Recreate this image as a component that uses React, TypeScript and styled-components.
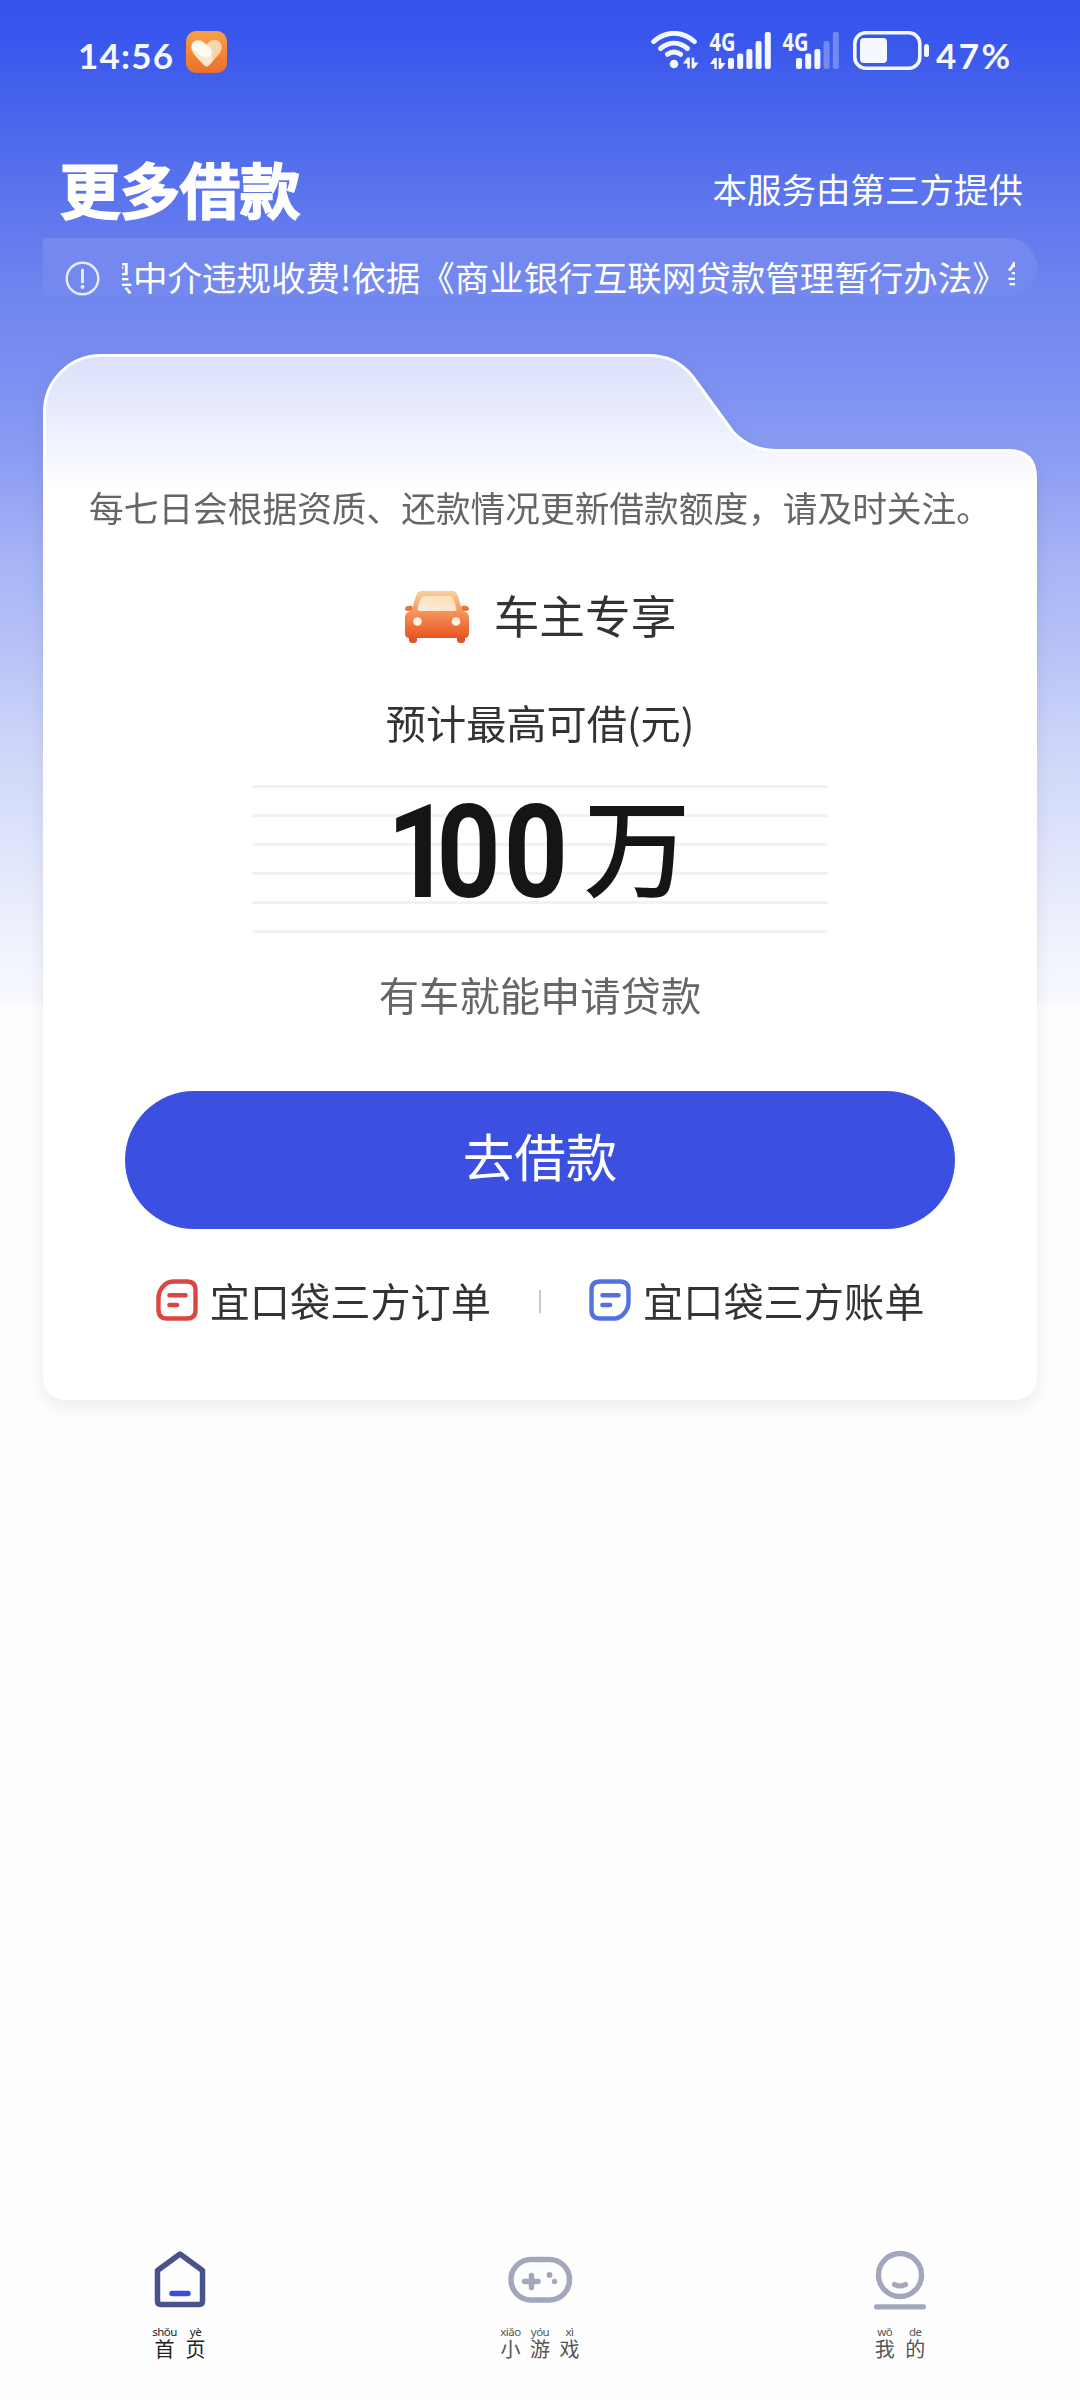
import React from 'react';
import styled, { createGlobalStyle } from 'styled-components';

const GlobalStyle = createGlobalStyle`
  * { box-sizing: border-box; }
  body {
    margin: 0;
    background: #fefefe;
    font-family: "Noto Sans", "Noto Sans CJK SC", sans-serif;
  }
`;

const cjk = '"Noto Sans CJK SC", sans-serif';

const Page = styled.div`
  width: 1080px;
  height: 2400px;
  overflow: hidden;
  display: flex;
  flex-direction: column;
  background:
    linear-gradient(
      180deg,
      #3654ec 0px, #3957ec 40px, #4c68ec 130px, #6279ee 225px, #7086ef 300px,
      #7e92f2 390px, #8d9df3 460px, #a7b4f6 560px, #b6c1f7 640px,
      #cdd5f9 740px, #dfe5fb 850px, #eef1fd 930px, #f9faff 1005px
    ) 0 0 / 100% 1005px no-repeat,
    #fefefe;
`;

const StatusBar = styled.header`
  height: 108px;
  padding: 31px 69px 0 78px;
  display: flex;
  justify-content: space-between;
  align-items: flex-start;
  color: #f5f8ff;
`;

const Cluster = styled.div`
  display: flex;
  align-items: flex-start;
`;

const StatusText = styled.span<{ $width: number; $spacing: number }>`
  width: ${(p) => p.$width}px;
  padding-top: 5px;
  font: 700 35px/38px Lato, sans-serif;
  letter-spacing: ${(p) => p.$spacing}px;
  white-space: nowrap;
`;

const Percent = styled(StatusText)`
  margin-left: 6px;
`;

const SignalSlot = styled.div<{ $before: number; $after: number }>`
  width: 63px;
  height: 40px;
  margin: 0 ${(p) => p.$after}px 0 ${(p) => p.$before}px;
`;

const SignalSvg = styled.svg`
  display: block;
  overflow: visible;
  font: 700 25px "Open Sans", sans-serif;
`;

const TitleRow = styled.div`
  height: 130px;
  padding: 35px 57px 0 60px;
  display: flex;
  justify-content: space-between;
  color: #fff;
`;

const Title = styled.h1`
  margin: 0;
  font: 500 60px/90px ${cjk};
  -webkit-text-stroke: 2.6px #fff;
  stroke-linejoin: round;
`;

const Provider = styled.span`
  padding-top: 20px;
  font: 400 34.5px/50px ${cjk};
`;

const Notice = styled.div`
  margin: 0 43px;
  height: 59px;
  padding: 0 22px;
  display: flex;
  align-items: flex-start;
  border-radius: 0 30px 30px 0;
  background: linear-gradient(180deg, rgba(255, 255, 255, 0.1), rgba(255, 255, 255, 0.03));
`;

const AlertSlot = styled.div`
  padding-top: 23px;
  height: 59px;
`;

const Marquee = styled.div`
  width: 893px;
  height: 62px;
  margin-left: 22px;
  padding-top: 10px;
  overflow: hidden;
`;

const MarqueeText = styled.div`
  margin-left: -23.5px;
  font: 400 34.5px/56px ${cjk};
  color: #fff;
  white-space: nowrap;
`;

const Card = styled.main`
  margin: 57px 43px 0;
  height: 1046px;
  display: flex;
  flex-direction: column;
  filter: drop-shadow(0 6px 9px rgba(0, 0, 0, 0.08));
`;

const TabShape = styled.svg`
  display: block;
  flex: none;
`;

const Panel = styled.section`
  height: 900px;
  border-radius: 0 0 22px 22px;
  background: #fff;
  display: flex;
  flex-direction: column;
  align-items: center;
`;

const Line = styled.div<{ $size: number; $height: number; $top: number; $color: string }>`
  margin-top: ${(p) => p.$top}px;
  font: 400 ${(p) => p.$size}px/${(p) => p.$height}px ${cjk};
  color: ${(p) => p.$color};
  white-space: nowrap;
`;

const Hint = styled(Line)`
  align-self: flex-start;
  padding-left: 46px;
`;

const Product = styled.div`
  margin-top: 48px;
  height: 68px;
  display: flex;
  align-items: center;
  gap: 24px;
  font: 400 45.7px/68px ${cjk};
  color: #333;
`;

const CarSvg = styled.svg`
  margin-top: 6px;
`;

const AmountBox = styled.div`
  margin-top: 33.5px;
  width: 576px;
  height: 148px;
  padding-left: 134.5px;
  display: flex;
  background: repeating-linear-gradient(180deg, #f0f1f9 0 2.6px, transparent 2.6px 29.1px);
  color: #151515;
`;

const Digits = styled.span`
  width: 196px;
  height: 136px;
  font: 700 130px/136px Roboto, sans-serif;
  letter-spacing: 3.6px;
  white-space: nowrap;
  transform: scaleX(0.86);
  transform-origin: 0 0;
`;

const LeadDigit = styled.span`
  letter-spacing: -17px;
`;

const Unit = styled.span`
  width: 108px;
  margin-left: 1px;
  font: 500 107px/116px ${cjk};
`;

const Button = styled.button`
  margin-top: 67px;
  width: 830px;
  height: 138px;
  flex: none;
  padding: 0 0 10px;
  border: 0;
  border-radius: 69px;
  background: #3b50e0;
  color: #fff;
  font: 400 51.5px/76px ${cjk};
`;

const Links = styled.div`
  margin-top: 41px;
  height: 60px;
  display: flex;
  align-items: center;
`;

const LinkItem = styled.div`
  display: flex;
  align-items: center;
  gap: 12px;
  font: 400 40.2px/60px ${cjk};
  color: #333;
`;

const Divider = styled.i`
  width: 2px;
  height: 23px;
  margin: 2px 48px 0;
  background: #c9c9c9;
`;

const Nav = styled.nav`
  margin-top: 850px;
  height: 150px;
  display: grid;
  grid-template-columns: repeat(3, 1fr);
`;

const NavItem = styled.div<{ $color: string }>`
  display: flex;
  flex-direction: column;
  align-items: center;
  gap: 15px;
  color: ${(p) => p.$color};
`;

const Label = styled.div<{ $gap: number }>`
  display: flex;
  gap: ${(p) => p.$gap}px;
`;

const Syllable = styled.div`
  width: 20px;
  display: flex;
  flex-direction: column;
  align-items: center;
`;

const Pinyin = styled.span`
  font: 400 11.5px/13px "Noto Sans", sans-serif;
  letter-spacing: -0.5px;
  white-space: nowrap;
`;

const Hanzi = styled.span`
  font: 400 20px/21px KaiTi, ${cjk};
`;

const HeartBadge = () => (
  <svg width="41" height="42" viewBox="0 0 41 42">
    <defs>
      <linearGradient id="badge" x1="0" y1="0" x2="0" y2="1">
        <stop offset="0" stopColor="#f5a147" />
        <stop offset="1" stopColor="#ee6e2c" />
      </linearGradient>
    </defs>
    <rect width="41" height="42" rx="10" fill="url(#badge)" />
    <path d="M20.500 35.500c-1.500 0-3-2-5-4L7.500 22.500C3 17 5.500 9 12 9c4 0 6.500 2 8.500 4.500C22.500 11 25 9 28.500 9c7 0 9.500 8 5 13.500l-8 9c-2 2-3.500 4-5 4z" fill="#fbd5ab" />
    <path d="M20.500 35.500c-1.500 0-3-2-5-4L7.500 22.500l8-4 10 1 1 11c-2 2-4.500 5-6 5z" fill="#fbe8d3" />
    <path d="M11.500 15.500L20 20.500" stroke="#fffaf2" strokeWidth="11.500" strokeLinecap="round" />
  </svg>
);

const Arrows = ({ x, y }: { x: number; y: number }) => (
  <g transform={`translate(${x} ${y})`} fill="currentColor">
    <path d="M4.300 0h2.500v11H4.300V6H0z" />
    <path d="M8.700 0h2.500v5h4.300L11.200 11H8.700z" />
  </g>
);

const Wifi = () => (
  <svg width="48" height="40" viewBox="0 0 48 40">
    <g fill="none" stroke="currentColor" strokeWidth="5" strokeLinecap="round">
      <path d="M2.700 10.500C15-.4 31-.4 43.300 10.500" />
      <path d="M9.500 17.500c8.500-7 18.500-7 27 0" />
      <path d="M16.500 23.300c4.200-3 8.800-3 13 0" />
    </g>
    <circle cx="23" cy="33" r="4.300" fill="currentColor" />
    <Arrows x={32} y={26.500} />
  </svg>
);

const Signal = ({ dim, arrows }: { dim: number; arrows?: boolean }) => {
  const tops = [27, 22.5, 18, 10, 1];
  const start = arrows ? 19 : 14;
  return (
    <SignalSvg width="63" height="40" viewBox="0 0 63 40">
      <text x="0.500" y="19.500" textLength="26" lengthAdjust="spacingAndGlyphs" fill="currentColor">4G</text>
      {arrows && <Arrows x={1} y={27} />}
      {tops.map((top, i) => (
        <rect key={top} x={start + i * 9.2} y={top} width="6" height={38 - top} rx="2" fill="currentColor" opacity={i >= 5 - dim ? 0.3 : 1} />
      ))}
    </SignalSvg>
  );
};

const Battery = () => (
  <svg width="77" height="40" viewBox="0 0 77 40">
    <rect x="1.800" y="1.800" width="65" height="35.500" rx="11" fill="none" stroke="currentColor" strokeWidth="3.600" />
    <rect x="7" y="7" width="27" height="25" rx="4" fill="currentColor" />
    <rect x="71" y="13" width="5" height="13" rx="2.500" fill="currentColor" />
  </svg>
);

const Alert = () => (
  <svg width="35" height="35" viewBox="0 0 35 35" fill="none" stroke="#e8ecff" strokeWidth="2.400">
    <circle cx="17.500" cy="17.500" r="15.800" />
    <path d="M17.500 9v12" strokeWidth="3" strokeLinecap="round" />
    <circle cx="17.500" cy="26" r="2" fill="#e8ecff" stroke="none" />
  </svg>
);

const outline =
  'M1.5 148V58A56.5 56.5 0 0 1 58 1.5H606C624 1.5 639 9 650 23L690 78C701 90 715 96.5 735 96.5H966Q992.5 97 992.5 124V148';

const CardTop = () => (
  <TabShape width="994" height="146" viewBox="0 0 994 146">
    <defs>
      <linearGradient id="tab" x1="0" y1="0" x2="0" y2="1">
        <stop offset="0" stopColor="#dbe0fb" />
        <stop offset="0.500" stopColor="#eceffe" />
        <stop offset="0.900" stopColor="#ffffff" />
      </linearGradient>
    </defs>
    <path d={outline} fill="url(#tab)" stroke="#fff" strokeWidth="3" />
  </TabShape>
);

const Car = () => (
  <CarSvg width="66" height="54" viewBox="0 0 66 54">
    <defs>
      <linearGradient id="car" x1="0" y1="0" x2="0" y2="1">
        <stop offset="0" stopColor="#fbd0a0" />
        <stop offset="0.400" stopColor="#f59a62" />
        <stop offset="1" stopColor="#ea5320" />
      </linearGradient>
      <linearGradient id="glass" x1="1" y1="0" x2="0" y2="1">
        <stop offset="0" stopColor="#fcdcae" />
        <stop offset="1" stopColor="#fbeee2" />
      </linearGradient>
    </defs>
    <path d="M1 19c0-3 3-4 7-3l2 5H4c-2 0-3-1-3-2zM65 19c0-3-3-4-7-3l-2 5h6c2 0 3-1 3-2z" fill="#e9743a" />
    <rect x="5" y="44" width="8" height="9" rx="3" fill="#d9542a" />
    <rect x="53" y="44" width="8" height="9" rx="3" fill="#d9542a" />
    <path d="M9 16c3-9 3-15 9-15h30c6 0 6 6 9 15l2 5c4 1 6 3 6 7v15c0 4-2 5-5 5H6c-3 0-5-1-5-5V28c0-4 2-6 6-7z" fill="url(#car)" />
    <path d="M14 17c2-7 3-11 7-11h24c4 0 5 4 7 11 1 3 0 4-3 4H17c-3 0-4-1-3-4z" fill="url(#glass)" />
    <circle cx="13.500" cy="31.500" r="4.300" fill="#fff1e0" />
    <circle cx="52" cy="31.500" r="4.300" fill="#fff1e0" />
  </CarSvg>
);

const NoteIcon = ({ color, flipped }: { color: string; flipped?: boolean }) => (
  <svg width="42" height="42" viewBox="0 0 42 42" fill="none" stroke={color} strokeWidth="4.400" strokeLinecap="round">
    <path
      d="M17 2.500H31Q39.500 2.500 39.500 11V31Q39.500 39.500 31 39.500H11Q2.500 39.500 2.500 31V19C2.500 11 9 2.500 17 2.500Z"
      transform={flipped ? 'rotate(180 21 21)' : undefined}
    />
    <path d="M13.500 16.300h16M13.500 26h7.500" strokeWidth="4.600" />
  </svg>
);

const HomeIcon = () => (
  <svg width="52" height="60" viewBox="0 0 52 60" fill="none" strokeLinecap="round" strokeLinejoin="round">
    <path d="M26 4L48.500 20.500V51Q48.500 54.500 45 54.500H7Q3.500 54.500 3.500 51V20.500Z" stroke="#47538a" strokeWidth="5.500" />
    <path d="M18 43.500H34" stroke="#3a50d8" strokeWidth="5.500" />
  </svg>
);

const GameIcon = () => (
  <svg width="66" height="60" viewBox="0 0 66 60" fill="none" stroke="#a3a7bd" strokeLinecap="round">
    <rect x="4" y="9.500" width="58.500" height="40.500" rx="20" strokeWidth="5.500" />
    <path d="M17.500 31.500H31M24.500 25.500V37.500" strokeWidth="5.500" />
    <g fill="#a3a7bd" stroke="none">
      <circle cx="42.500" cy="25" r="2.900" />
      <circle cx="47.500" cy="31.500" r="2.700" />
    </g>
  </svg>
);

const MeIcon = () => (
  <svg width="54" height="60" viewBox="0 0 54 60" fill="none" stroke="#a3a7bd" strokeLinecap="round">
    <circle cx="27" cy="25" r="21.500" strokeWidth="5.300" />
    <path d="M21.500 34.500q5.500 3 11 0" strokeWidth="5.200" />
    <path d="M3.500 56.800H50.500" strokeWidth="5.200" />
  </svg>
);

const tabs = [
  { icon: <HomeIcon />, color: '#222', gap: 11, text: [['shǒu', '首'], ['yè', '页']] },
  { icon: <GameIcon />, color: '#555', gap: 9.5, text: [['xiǎo', '小'], ['yóu', '游'], ['xì', '戏']] },
  { icon: <MeIcon />, color: '#555', gap: 10.5, text: [['wǒ', '我'], ['de', '的']] },
];

export default function App() {
  return (
    <Page>
      <GlobalStyle />
      <StatusBar>
        <Cluster>
          <StatusText $width={108} $spacing={1.2}>14:56</StatusText>
          <HeartBadge />
        </Cluster>
        <Cluster>
          <Wifi />
          <SignalSlot $before={9.5} $after={0}><Signal dim={0} arrows /></SignalSlot>
          <SignalSlot $before={10} $after={8.5}><Signal dim={2} /></SignalSlot>
          <Battery />
          <Percent $width={75} $spacing={2.4}>47%</Percent>
        </Cluster>
      </StatusBar>
      <TitleRow>
        <Title>更多借款</Title>
        <Provider>本服务由第三方提供</Provider>
      </TitleRow>
      <Notice>
        <AlertSlot><Alert /></AlertSlot>
        <Marquee>
          <MarqueeText>黑中介违规收费!依据《商业银行互联网贷款管理暂行办法》等</MarqueeText>
        </Marquee>
      </Notice>
      <Card>
        <CardTop />
        <Panel>
          <Hint $size={34.7} $height={50} $top={-18.5} $color="#666">每七日会根据资质、还款情况更新借款额度，请及时关注。</Hint>
          <Product><Car />车主专享</Product>
          <Line $size={40.2} $height={60} $top={44} $color="#333">预计最高可借(元)</Line>
          <AmountBox>
            <Digits><LeadDigit>1</LeadDigit>00</Digits>
            <Unit>万</Unit>
          </AmountBox>
          <Line $size={40.3} $height={60} $top={31} $color="#666">有车就能申请贷款</Line>
          <Button>去借款</Button>
          <Links>
            <LinkItem><NoteIcon color="#dc4540" />宜口袋三方订单</LinkItem>
            <Divider />
            <LinkItem><NoteIcon color="#5570e2" flipped />宜口袋三方账单</LinkItem>
          </Links>
        </Panel>
      </Card>
      <Nav>
        {tabs.map((tab) => (
          <NavItem key={tab.text[0][1]} $color={tab.color}>
            {tab.icon}
            <Label $gap={tab.gap}>
              {tab.text.map(([sound, char]) => (
                <Syllable key={char}>
                  <Pinyin>{sound}</Pinyin>
                  <Hanzi>{char}</Hanzi>
                </Syllable>
              ))}
            </Label>
          </NavItem>
        ))}
      </Nav>
    </Page>
  );
}
